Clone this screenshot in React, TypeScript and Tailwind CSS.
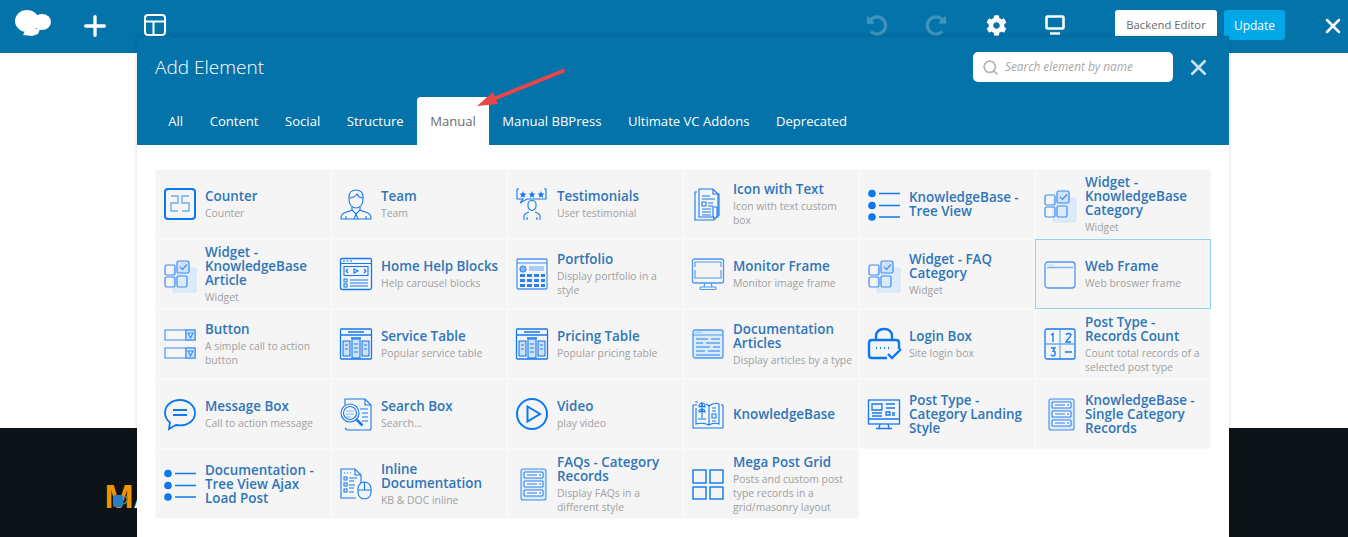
import type { ReactNode } from 'react';
import { Search, X, Plus } from 'lucide-react';
import { FaCog, FaUndoAlt, FaRedoAlt } from 'react-icons/fa';

const Svg = ({ children }: { children: ReactNode }) => (
  <svg viewBox="0 0 32 32" className="w-8 h-8 shrink-0 overflow-visible" fill="none" stroke="#1479f0" strokeWidth="1.100">
    {children}
  </svg>
);

const WidgetIcon = () => (
  <Svg>
    <rect x="9" y="10" width="23" height="24" rx="2" fill="#dcebfa" stroke="#d3e5f8" />
    <g stroke="#3d8df0" strokeWidth="1.200">
      <rect x="1" y="7" width="10" height="10" rx="1.500" />
      <rect x="13" y="3" width="12" height="12" rx="1.500" fill="#cfe2f8" />
      <rect x="1" y="19" width="10" height="10" rx="1.500" />
      <rect x="13" y="18" width="10" height="11" rx="1.500" />
      <path d="M16 9l2.500 2.500L23 6.500" />
    </g>
  </Svg>
);

const TreeIcon = () => (
  <Svg>
    <circle cx="4" cy="5.500" r="3.800" fill="#0b78f0" stroke="none" />
    <circle cx="4" cy="17.500" r="3.800" fill="#0b78f0" stroke="none" />
    <circle cx="4" cy="29" r="3.800" fill="#0b78f0" stroke="none" />
    <path d="M11 5.500h21M11 17.500h21M11 29h21" strokeWidth="1.600" />
  </Svg>
);

const RecordsIcon = () => (
  <Svg>
    <rect x="5" y="1" width="25" height="31" rx="2" stroke="#3d8df0" fill="#dcebfa" />
    <g stroke="#2a80ee">
      <rect x="8" y="4" width="19" height="6" rx="1" fill="#f5f5f5" />
      <rect x="8" y="13" width="19" height="6" rx="1" fill="#f5f5f5" />
      <rect x="8" y="22" width="19" height="6" rx="1" fill="#f5f5f5" />
      <path d="M11 7h10M11 16h10M11 25h10M24 6v2M24 15v2M24 24v2" />
    </g>
  </Svg>
);

const TableIcon = () => (
  <Svg>
    <rect x="0.500" y="1" width="31" height="30" rx="1" strokeWidth="1.300" />
    <path d="M0.500 7h31M8 4h16M11 10h10" strokeWidth="1.300" />
    <g fill="#cfe2f8">
      <rect x="3" y="13" width="7" height="15" />
      <rect x="12" y="11" width="8" height="19" />
      <rect x="22" y="13" width="7" height="15" />
    </g>
    <path d="M5 17h3M5 21h3M14 16h4M14 20h4M14 24h4M24 17h3M24 21h3" />
  </Svg>
);

const icons: Record<string, ReactNode> = {
  counter: (
    <Svg>
      <rect x="1" y="1" width="30" height="30" rx="3" strokeWidth="2" stroke="#0b78f0" />
      <path d="M7 8h7v7H7v8h7M25 8h-7v7h7v8h-7" stroke="#6aaef5" strokeWidth="1.400" />
    </Svg>
  ),
  team: (
    <Svg>
      <path d="M9 9c0-5 3-7 7-7s7 2 7 7v3c0 4-3 8-7 8s-7-4-7-8z" />
      <path d="M9 10c3 0 6-1 8-4 1 2 3 4 6 4" />
      <path d="M12 19v3l-8 3c-2 1-3 3-3 6h30c0-3-1-5-3-6l-8-3v-3" />
      <path d="M12 22l4 4 4-4M16 26l-2 5M16 26l2 5M6 31v-3M26 31v-3" />
    </Svg>
  ),
  testimonials: (
    <Svg>
      <path d="M3 1H1v10h6l-3 4 7-4h19V1h-2" />
      <g fill="#1479f0" stroke="none">
        <path d="M7 3l1 2.400 2.500.2-1.900 1.600.6 2.500L7 8.400 4.800 9.700l.6-2.500L3.500 5.600 6 5.400zM16 3l1 2.400 2.500.2-1.900 1.600.6 2.500L16 8.400l-2.200 1.300.6-2.500-1.900-1.600 2.500-.2zM25 3l1 2.400 2.500.2-1.900 1.600.6 2.500L25 8.400l-2.200 1.300.6-2.500-1.900-1.600 2.500-.2z" />
      </g>
      <path d="M12 16c0-2 2-3.500 4-3.500s4 1.500 4 3.500v2c0 2.500-2 4.500-4 4.500s-4-2-4-4.500zM8 32v-4c0-2 2-3 5-4M24 32v-4c0-2-2-3-5-4M11 32v-3M21 32v-3" />
    </Svg>
  ),
  iconText: (
    <Svg>
      <path d="M5 4H3v28h19v-2M25 6h2v22" />
      <path d="M7 1h14l5 5v23H7z" fill="#f5f5f5" />
      <path d="M21 1v5h5M10 8h8M10 11h13M10 14h4v4h-4zM16 15h5M16 18h5M10 21h9M10 24h9M10 27h9" />
      <path d="M21 19h4v9l-2 3-2-3z" fill="#f5f5f5" />
    </Svg>
  ),
  widget: <WidgetIcon />,
  tree: <TreeIcon />,
  help: (
    <Svg>
      <rect x="0.500" y="0.500" width="31" height="31" rx="1.500" strokeWidth="1.300" />
      <path d="M0.500 5.500h31M3 3h2M6.500 3h2M10 3h2" />
      <rect x="4" y="8.500" width="24" height="9" />
      <path d="M8 11l-2 2 2 2M24 11l2 2-2 2M14 11l4 2-4 2z" />
      <path d="M10 22h18M10 25h18M10 28h18M4 21h3v3H4zM4 26h3v3H4z" />
    </Svg>
  ),
  portfolio: (
    <Svg>
      <rect x="1" y="1" width="30" height="30" rx="1" stroke="#4d97f2" strokeWidth="1.300" />
      <path d="M1 5h30" stroke="#4d97f2" />
      <circle cx="7" cy="11" r="3" fill="#7db5f5" stroke="#3d8df0" />
      <rect x="13" y="8" width="15" height="5" fill="#a7cdf8" stroke="none" />
      <g fill="#2a80ee" stroke="none">
        <rect x="4" y="16" width="5" height="3" /><rect x="11" y="16" width="5" height="3" /><rect x="18" y="16" width="5" height="3" /><rect x="25" y="16" width="4" height="3" />
        <rect x="4" y="21" width="5" height="3" /><rect x="11" y="21" width="5" height="3" /><rect x="18" y="21" width="5" height="3" /><rect x="25" y="21" width="4" height="3" />
        <rect x="4" y="26" width="5" height="3" /><rect x="11" y="26" width="5" height="3" /><rect x="18" y="26" width="5" height="3" /><rect x="25" y="26" width="4" height="3" />
      </g>
    </Svg>
  ),
  monitor: (
    <Svg>
      <g stroke="#4d97f2">
        <rect x="0.500" y="1" width="31" height="24" rx="2" strokeWidth="1.300" />
        <path d="M3 9V4h26v5M3 12v8h26v-8" />
        <path d="M13 25l-1 4M19 25l1 4" />
        <rect x="8" y="29" width="16" height="2.500" rx="1" />
      </g>
    </Svg>
  ),
  frame: (
    <Svg>
      <rect x="1" y="4" width="30" height="26" rx="3" stroke="#4d97f2" strokeWidth="1.300" />
      <path d="M3 9.500h26" stroke="#7db5f5" strokeWidth="1.600" />
      <path d="M3.500 7h1M6 7h1M8.500 7h1" stroke="#7db5f5" />
    </Svg>
  ),
  button: (
    <Svg>
      <g stroke="#3d8df0">
        <path d="M1 2h30v10H1zM22 2v10M1 20h30v10H1zM22 20v10" />
        <rect x="22" y="2" width="9" height="10" fill="#cfe2f8" />
        <rect x="22" y="20" width="9" height="10" fill="#cfe2f8" />
        <path d="M24 5l2.500 5L29 5zM24 23l2.500 5 2.500-5z" />
      </g>
    </Svg>
  ),
  table: <TableIcon />,
  docs: (
    <Svg>
      <rect x="1" y="2" width="30" height="28" rx="2" stroke="#4d97f2" strokeWidth="1.300" fill="#dcebfa" />
      <path d="M1 7h30M3.500 4.500h1M6 4.500h1M8.500 4.500h1" stroke="#4d97f2" />
      <g stroke="#7db5f5" strokeWidth="1.800">
        <path d="M4 11h12M19 11h9M4 15h7M14 15h14M4 19h14M21 19h7M4 23h9M16 23h12M4 27h24" />
      </g>
    </Svg>
  ),
  login: (
    <Svg>
      <path d="M8 12V8c0-4 3-7 8-7s8 3 8 7v4" strokeWidth="2.400" stroke="#0b78f0" />
      <path d="M19 30H4c-1.500 0-3-1-3-3V15c0-2 1.500-3 3-3h24c1.500 0 3 1 3 3v6" strokeWidth="2.400" stroke="#0b78f0" />
      <path d="M8 20h1M12 20h1M16 20h1M20 20h1" strokeWidth="2" stroke="#0b78f0" />
      <path d="M20 26l4 4 9-9" strokeWidth="2.400" stroke="#0b78f0" />
    </Svg>
  ),
  count: (
    <Svg>
      <rect x="1" y="1" width="30" height="30" rx="2" strokeWidth="1.300" />
      <path d="M16 2v28M2 16h28" stroke="#6aaef5" strokeWidth="1.300" />
      <path d="M7 7l2-1.500V14M22 7c0-2 5-2 5 0s-5 5-5 7h5M7 20h4l-2 3c3 0 3 5 0 5-1 0-2-.5-2-1.500M21 24h7" strokeWidth="1.300" />
    </Svg>
  ),
  message: (
    <Svg>
      <path d="M16 2C8 2 1 7 1 15c0 4 2 7 5 9.500L5 31l7-4c1.500.3 2.500.4 4 .4 8 0 15-5 15-12.400S24 2 16 2z" strokeWidth="1.800" stroke="#0b78f0" />
      <path d="M9 12h14M9 17h14" strokeWidth="1.800" stroke="#0b78f0" />
    </Svg>
  ),
  search: (
    <Svg>
      <path d="M5 7V1h20l6 6v23c0 1-1 2-2 2H7l-2-2" />
      <path d="M25 1v6h6M20 11h8M22 15h6M22 19h6M22 23h6" />
      <circle cx="10" cy="15" r="9" fill="#f5f5f5" />
      <circle cx="10" cy="15" r="6.500" />
      <path d="M6 13h8M6 16h8M6 19h5" stroke="#7db5f5" />
      <path d="M16.500 21.500l6 6" strokeWidth="2.500" />
    </Svg>
  ),
  video: (
    <Svg>
      <circle cx="16" cy="16" r="15" strokeWidth="2" stroke="#0b78f0" />
      <path d="M11.500 8.500L24 16l-12.500 7.500z" strokeWidth="2" stroke="#0b78f0" />
    </Svg>
  ),
  kb: (
    <Svg>
      <path d="M5 7H1v23h30V7h-2" />
      <path d="M3 4h3M17 8c4-3 8-3 10-2v20c-3-1-7-1-10 1V8zM17 8c-1-1-1.500-1-3-2M17 27c-4-2-9-2-13-1V10" />
      <path d="M10 4v16M10 5c-2 0-3 2-3 4 2 0 3-2 3-4zM10 5c2 0 3 2 3 4-2 0-3-2-3-4zM10 11c-2 0-3 1-3 3 2 0 3-1 3-3zM10 11c2 0 3 1 3 3-2 0-3-1-3-3zM6 21h8" />
      <path d="M20 10h4M20 13h4M20 16h4v4h-4zM20 23h4" />
    </Svg>
  ),
  landing: (
    <Svg>
      <rect x="0.500" y="2" width="31" height="24" strokeWidth="1.300" />
      <path d="M0.500 21h31M12 26l-1 4M20 26l1 4M8 30.500h16" strokeWidth="1.300" />
      <path d="M4 6h10v6H4zM4 15h10M4 18h10M18 6h9M18 10h9M18 14h4v3h-4zM24 15h3M24 17h3" strokeWidth="1.300" />
    </Svg>
  ),
  records: <RecordsIcon />,
  inline: (
    <Svg>
      <path d="M21 19V7l-6-6H1v29h15" />
      <path d="M4 5h1M7 5h1M10 5h1M15 1v6h6M4 9h3v3H4zM9 10h8M9 13h5M4 15h3v3H4zM9 17h6M9 20h5M4 21h3v3H4zM9 24h5" />
      <rect x="18" y="14" width="13" height="17" rx="6.500" fill="#f5f5f5" />
      <path d="M24.500 14v8M18 22h13M24.500 18v2" />
    </Svg>
  ),
  faq: <RecordsIcon />,
  grid: (
    <Svg>
      <g strokeWidth="1.400" stroke="#0b78f0">
        <rect x="1" y="2" width="13" height="13" />
        <rect x="18" y="2" width="13" height="13" />
        <rect x="1" y="19" width="13" height="12" />
        <rect x="18" y="19" width="13" height="12" />
      </g>
    </Svg>
  ),
};

const elements = [
  { icon: 'counter', title: 'Counter', desc: 'Counter' },
  { icon: 'team', title: 'Team', desc: 'Team' },
  { icon: 'testimonials', title: 'Testimonials', desc: 'User testimonial' },
  { icon: 'iconText', title: 'Icon with Text', desc: 'Icon with text custom box' },
  { icon: 'tree', title: 'KnowledgeBase - Tree View' },
  { icon: 'widget', title: 'Widget - KnowledgeBase Category', desc: 'Widget' },
  { icon: 'widget', title: 'Widget - KnowledgeBase Article', desc: 'Widget' },
  { icon: 'help', title: 'Home Help Blocks', desc: 'Help carousel blocks' },
  { icon: 'portfolio', title: 'Portfolio', desc: 'Display portfolio in a style' },
  { icon: 'monitor', title: 'Monitor Frame', desc: 'Monitor image frame' },
  { icon: 'widget', title: 'Widget - FAQ Category', desc: 'Widget' },
  { icon: 'frame', title: 'Web Frame', desc: 'Web broswer frame', active: true },
  { icon: 'button', title: 'Button', desc: 'A simple call to action button' },
  { icon: 'table', title: 'Service Table', desc: 'Popular service table' },
  { icon: 'table', title: 'Pricing Table', desc: 'Popular pricing table' },
  { icon: 'docs', title: 'Documentation Articles', desc: 'Display articles by a type' },
  { icon: 'login', title: 'Login Box', desc: 'Site login box' },
  { icon: 'count', title: 'Post Type - Records Count', desc: 'Count total records of a selected post type' },
  { icon: 'message', title: 'Message Box', desc: 'Call to action message' },
  { icon: 'search', title: 'Search Box', desc: 'Search...' },
  { icon: 'video', title: 'Video', desc: 'play video' },
  { icon: 'kb', title: 'KnowledgeBase' },
  { icon: 'landing', title: 'Post Type - Category Landing Style' },
  { icon: 'records', title: 'KnowledgeBase - Single Category Records' },
  { icon: 'tree', title: 'Documentation - Tree View Ajax Load Post' },
  { icon: 'inline', title: 'Inline Documentation', desc: 'KB & DOC inline' },
  { icon: 'faq', title: 'FAQs - Category Records', desc: 'Display FAQs in a different style' },
  { icon: 'grid', title: 'Mega Post Grid', desc: 'Posts and custom post type records in a grid/masonry layout' },
];

const tabs = ['All', 'Content', 'Social', 'Structure', 'Manual', 'Manual BBPress', 'Ultimate VC Addons', 'Deprecated'];

export default function App() {
  return (
    <div className="relative h-[537px] w-[1348px] overflow-hidden bg-white font-['Open_Sans',sans-serif]">
      {/* top bar */}
      <div className="flex h-[53px] items-start bg-[#0473aa] pt-[10px] text-white">
        <svg viewBox="0 0 36 28" className="ml-[15px] mt-[-1px] h-7 w-9 shrink-0" fill="#fff">
          <ellipse cx="12" cy="12" rx="12" ry="11" />
          <ellipse cx="27" cy="13" rx="9" ry="8" />
          <path d="M11 20h14l-2 5-6 2-9-1z" />
        </svg>
        <Plus className="ml-[28px] h-8 w-8 shrink-0" strokeWidth={2.5} />
        <svg viewBox="0 0 22 22" className="ml-[33px] mt-[4px] h-[22px] w-[22px] shrink-0" fill="none" stroke="#fff" strokeWidth="2">
          <rect x="1" y="1" width="20" height="20" rx="3" />
          <path d="M1 7.500h20M9.500 7.500V21" />
        </svg>
        <FaUndoAlt className="ml-[700px] mt-[5px] h-[21px] w-[22px] shrink-0 text-[#3f93bd]" />
        <FaRedoAlt className="ml-[37px] mt-[5px] h-[21px] w-[22px] shrink-0 text-[#3f93bd]" />
        <FaCog className="ml-[39px] mt-[5px] h-[21px] w-[21px] shrink-0" />
        <svg viewBox="0 0 20 20" className="ml-[38px] mt-[5px] h-5 w-5 shrink-0" fill="none" stroke="#fff">
          <rect x="1.500" y="1.500" width="17" height="12" rx="1" strokeWidth="2.600" />
          <path d="M5 18.500h10" strokeWidth="2.400" />
        </svg>
        <button className="ml-[50px] h-[30px] w-[102px] rounded-t-[3px] bg-white pt-px text-[11.300px] text-[#6b6b6b]">Backend Editor</button>
        <button className="ml-[7px] h-[30px] w-[61px] rounded-[3px] bg-[#00a8e8] pt-px text-[12px] text-white">Update</button>
        <X className="ml-[36px] mt-[4px] h-6 w-6 shrink-0" strokeWidth={2.500} />
      </div>

      {/* page behind the modal */}
      <div className="mt-[375px] h-[109px] bg-[#0d1317] pl-[104px] pt-[54px]">
        <div className="relative flex h-7 items-center text-[32px] font-bold leading-7">
          <span className="text-[#f39200]">M</span>
          <span className="text-white">A</span>
          <svg viewBox="0 0 16 14" className="absolute left-[9px] top-[12px] h-[14px] w-4">
            <rect x="0" y="1" width="10" height="12" rx="2" fill="#2a7fc4" />
            <path d="M10 3h3c2 0 2 6-3 7" fill="none" stroke="#8a7a50" strokeWidth="1.500" />
          </svg>
        </div>
      </div>

      {/* add element modal */}
      <div className="absolute left-[137px] top-[36px] bottom-0 w-[1092px] bg-white shadow-[0_0_4px_rgba(0,0,0,0.15)]">
        <div className="h-[109px] border-t border-[#046a9d] bg-[#0473aa]">
          <div className="flex h-[60px] items-center pl-[18px]">
            <h2 className="text-[19px] font-light text-white">Add Element</h2>
            <div className="ml-auto flex h-[30px] w-[200px] items-center rounded-[5px] bg-white pl-[9px]">
              <Search className="h-[17px] w-[17px] text-[#b5b5b5]" strokeWidth={2.500} />
              <span className="ml-[6px] text-[11.800px] italic text-[#a8a8a8]">Search element by name</span>
            </div>
            <X className="ml-[13px] mr-[18px] h-[25px] w-[25px] text-[#cfe3ee]" strokeWidth={2.500} />
          </div>
          <div className="flex pl-[18px]">
            {tabs.map((tab) => (
              <div
                key={tab}
                className={`flex h-[48px] items-center rounded-t-[4px] px-[13.250px] pt-[2px] text-[13.100px] ${
                  tab === 'Manual' ? 'bg-white text-[#6d6d6d]' : 'text-white'
                }`}
              >
                {tab}
              </div>
            ))}
          </div>
        </div>

        <div className="grid grid-cols-[repeat(6,176px)] auto-rows-[70px] pl-[18px] pt-[24px]">
          {elements.map((el) => (
            <div
              key={el.title}
              className={`flex items-center gap-[9px] border bg-[#f5f5f5] pl-2 pr-1 ${
                el.active ? 'border-[#8fd4f5]' : 'border-[#f9f9f9]'
              }`}
            >
              {icons[el.icon]}
              <div className="min-w-0">
                <div className="text-[13.400px] font-semibold leading-[14px] text-[#2f75b8]">{el.title}</div>
                {el.desc && <div className="mt-[3px] text-[10.400px] leading-[14px] text-[#a0a0a0]">{el.desc}</div>}
              </div>
            </div>
          ))}
        </div>
      </div>

      {/* red arrow pointing at the Manual tab */}
      <svg className="pointer-events-none absolute left-[470px] top-[65px] h-[50px] w-[100px]" viewBox="0 0 100 50" fill="none">
        <path d="M93 6L16 37" stroke="#e8474a" strokeWidth="4" strokeLinecap="round" />
        <path d="M7 41l16-14 5 12z" fill="#e8474a" />
      </svg>
    </div>
  );
}
